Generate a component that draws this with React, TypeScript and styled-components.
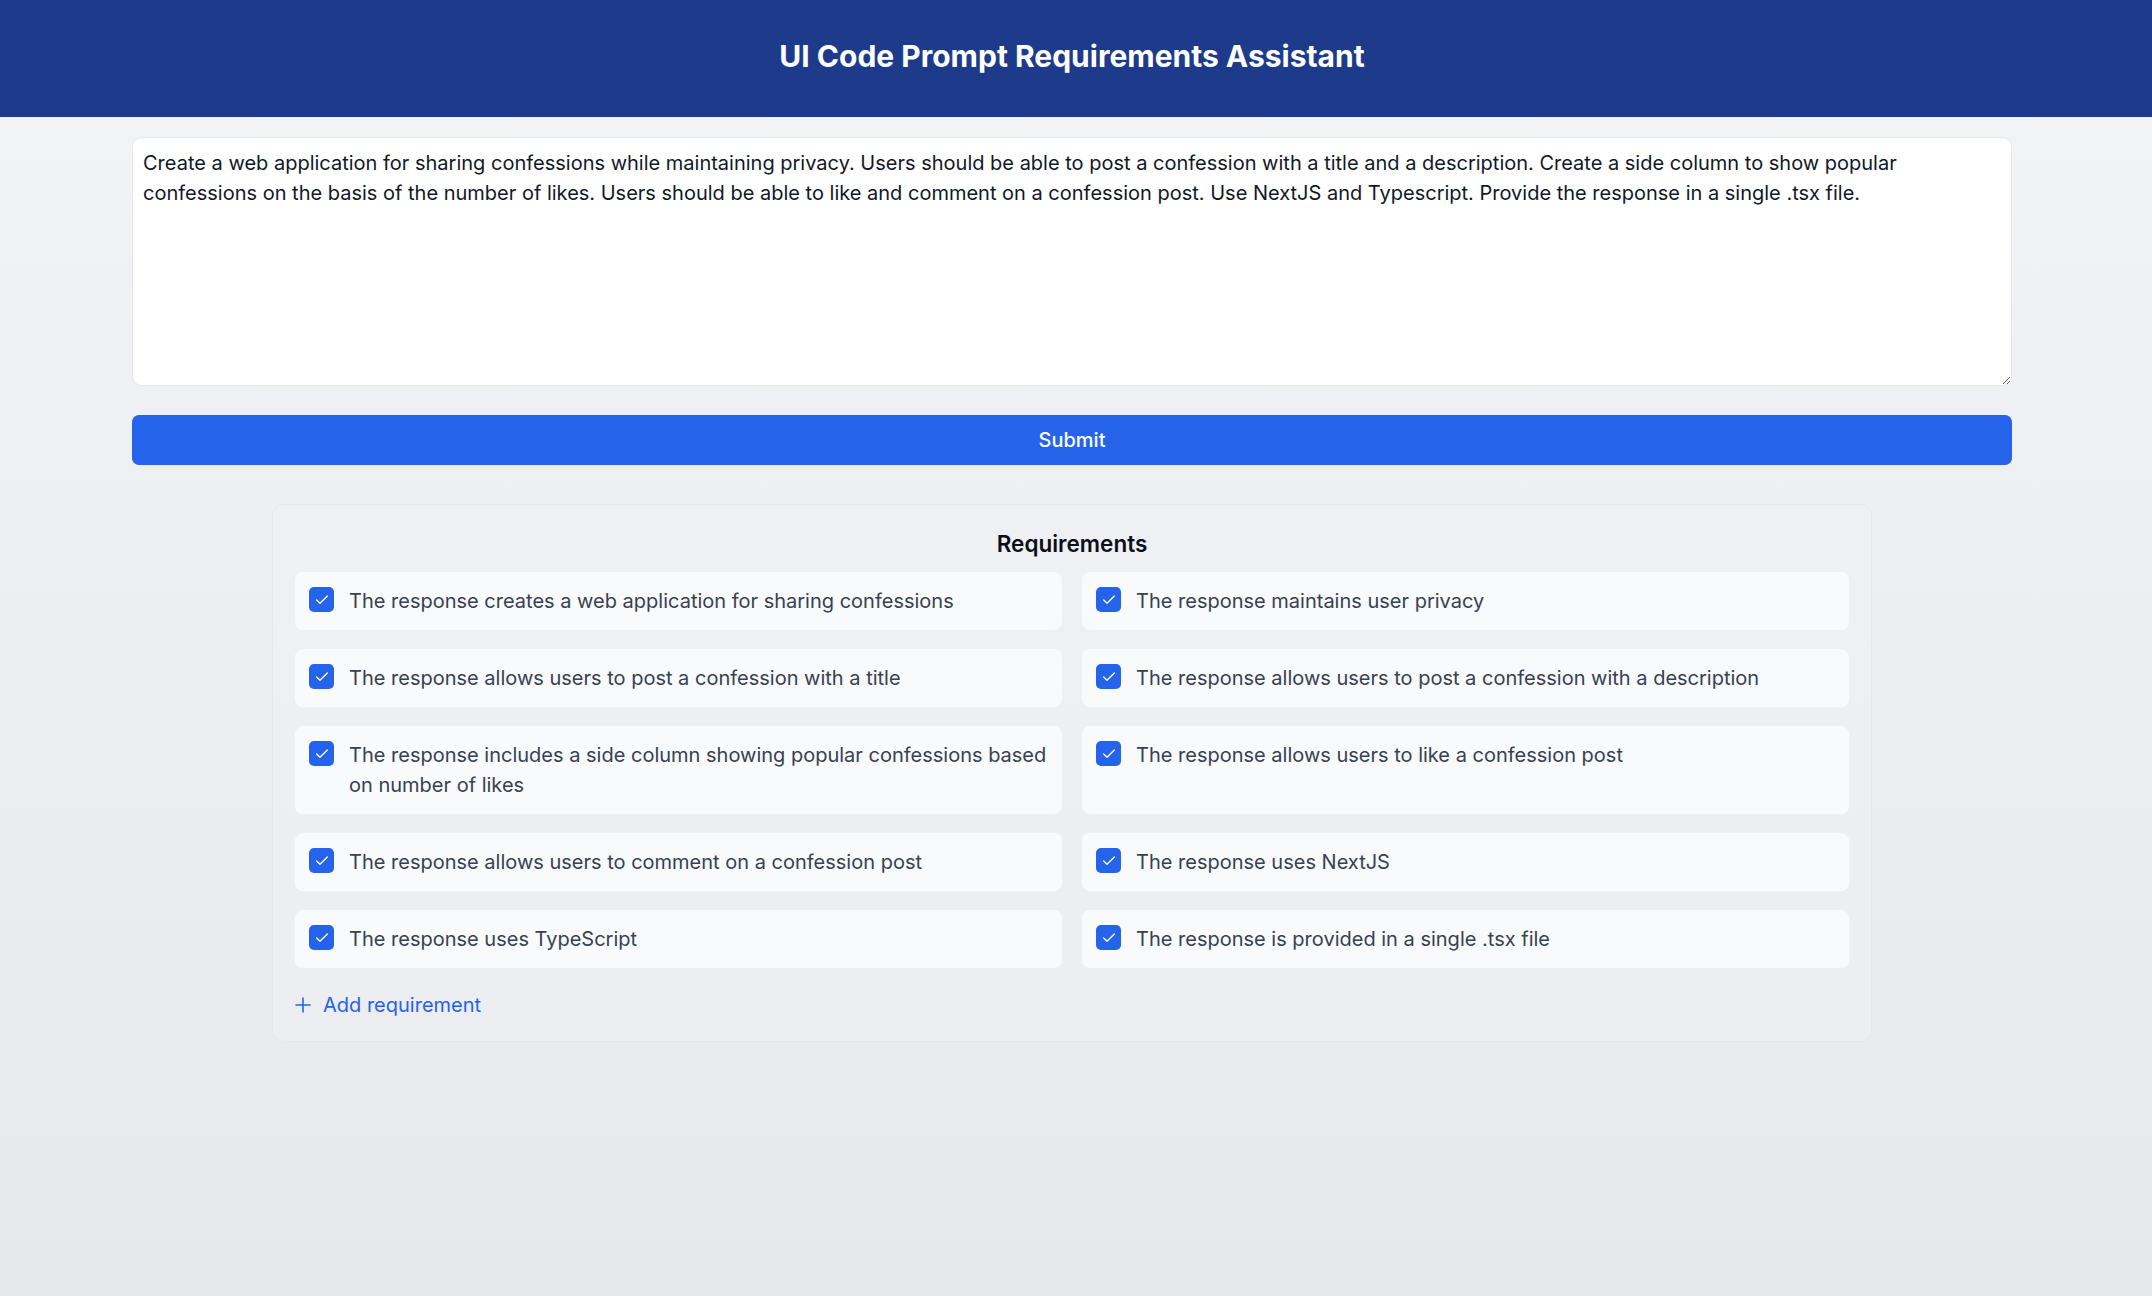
import React, { useState } from "react";
import styled, { createGlobalStyle } from "styled-components";

const GlobalStyle = createGlobalStyle`
  html, body {
    margin: 0;
    padding: 0;
  }
  body {
    font-family: Inter, "Noto Sans", "Liberation Sans", sans-serif;
    -webkit-font-smoothing: antialiased;
  }
  * { box-sizing: border-box; }
`;

const Page = styled.div`
  min-height: 100vh;
  background: linear-gradient(180deg, #f3f4f6 0%, #e7e8ec 100%);
`;

const Header = styled.header`
  background: #1e3a8a;
  height: 117px;
  display: flex;
  align-items: center;
  justify-content: center;
  padding: 0 8px 5px 0;
`;

const Title = styled.h1`
  margin: 0;
  color: #ffffff;
  font-size: 30px;
  line-height: 40px;
  font-weight: 700;
`;

const Main = styled.main`
  padding: 20px 140px 40px 132px;
  display: flex;
  flex-direction: column;
`;

const PromptArea = styled.textarea`
  width: 100%;
  height: 249px;
  border: 1px solid #e5e7eb;
  border-radius: 10px;
  background: #ffffff;
  padding: 10px;
  font-family: Inter, "Noto Sans", "Liberation Sans", sans-serif;
  font-size: 20px;
  line-height: 30px;
  color: #111827;
  outline: none;
  resize: vertical;
`;

const SubmitButton = styled.button`
  margin-top: 29px;
  height: 50px;
  width: 100%;
  border: none;
  border-radius: 7px;
  background: #2563eb;
  color: #ffffff;
  font-family: Inter, "Noto Sans", "Liberation Sans", sans-serif;
  font-size: 20px;
  font-weight: 500;
  cursor: pointer;
`;

const Card = styled.section`
  align-self: center;
  width: 1600px;
  margin-top: 39px;
  border: 1px solid rgba(226, 228, 232, 0.7);
  border-radius: 12px;
  background: rgba(240, 241, 244, 0.45);
  padding: 21px;
`;

const CardTitle = styled.h2`
  margin: 0 0 10px;
  text-align: center;
  font-size: 22.5px;
  line-height: 35px;
  font-weight: 600;
  color: #0b0f19;
`;

const Grid = styled.div`
  display: grid;
  grid-template-columns: 1fr 1fr;
  column-gap: 18px;
  row-gap: 17px;
`;

const Item = styled.label`
  display: flex;
  align-items: flex-start;
  gap: 15px;
  padding: 14px;
  background: #f9fafb;
  border: 1px solid #eff0f2;
  border-radius: 9px;
  cursor: pointer;
`;

const Box = styled.span<{ $checked: boolean }>`
  flex: 0 0 25px;
  width: 25px;
  height: 25px;
  margin-top: 1px;
  border-radius: 5px;
  background: ${(p) => (p.$checked ? "#2563eb" : "#ffffff")};
  border: ${(p) => (p.$checked ? "none" : "1px solid #9ca3af")};
  display: flex;
  align-items: center;
  justify-content: center;
`;

const ItemText = styled.span`
  font-size: 20px;
  line-height: 30px;
  color: #374151;
`;

const AddButton = styled.button`
  margin-top: 21px;
  display: flex;
  align-items: center;
  gap: 12px;
  padding: 0 0 0 1px;
  border: none;
  background: transparent;
  color: #2563eb;
  font-family: Inter, "Noto Sans", "Liberation Sans", sans-serif;
  font-size: 20px;
  line-height: 30px;
  cursor: pointer;
`;

const initialRequirements = [
  "The response creates a web application for sharing confessions",
  "The response maintains user privacy",
  "The response allows users to post a confession with a title",
  "The response allows users to post a confession with a description",
  "The response includes a side column showing popular confessions based on number of likes",
  "The response allows users to like a confession post",
  "The response allows users to comment on a confession post",
  "The response uses NextJS",
  "The response uses TypeScript",
  "The response is provided in a single .tsx file",
];

const promptText =
  "Create a web application for sharing confessions while maintaining privacy. Users should be able to post a confession with a title and a description. Create a side column to show popular confessions on the basis of the number of likes. Users should be able to like and comment on a confession post. Use NextJS and Typescript. Provide the response in a single .tsx file.";

const CheckIcon = () => (
  <svg width="16" height="16" viewBox="0 0 24 24" fill="none" stroke="#ffffff" strokeWidth="2" strokeLinecap="round" strokeLinejoin="round">
    <path d="M20 6 9 17l-5-5" />
  </svg>
);

const PlusIcon = () => (
  <svg width="16" height="16" viewBox="0 0 16 16" fill="none" stroke="#2563eb" strokeWidth="1.6" strokeLinecap="round">
    <path d="M1 8h14M8 1v14" />
  </svg>
);

export default function App() {
  const [prompt, setPrompt] = useState(promptText);
  const [checked, setChecked] = useState<boolean[]>(initialRequirements.map(() => true));

  const toggle = (i: number) =>
    setChecked((prev) => prev.map((v, j) => (j === i ? !v : v)));

  return (
    <Page>
      <GlobalStyle />
      <Header>
        <Title>UI Code Prompt Requirements Assistant</Title>
      </Header>
      <Main>
        <PromptArea value={prompt} onChange={(e) => setPrompt(e.target.value)} />
        <SubmitButton type="button">Submit</SubmitButton>
        <Card>
          <CardTitle>Requirements</CardTitle>
          <Grid>
            {initialRequirements.map((r, i) => (
              <Item key={i} onClick={() => toggle(i)}>
                <Box $checked={checked[i]}>{checked[i] && <CheckIcon />}</Box>
                <ItemText>{r}</ItemText>
              </Item>
            ))}
          </Grid>
          <AddButton type="button">
            <PlusIcon />
            Add requirement
          </AddButton>
        </Card>
      </Main>
    </Page>
  );
}
